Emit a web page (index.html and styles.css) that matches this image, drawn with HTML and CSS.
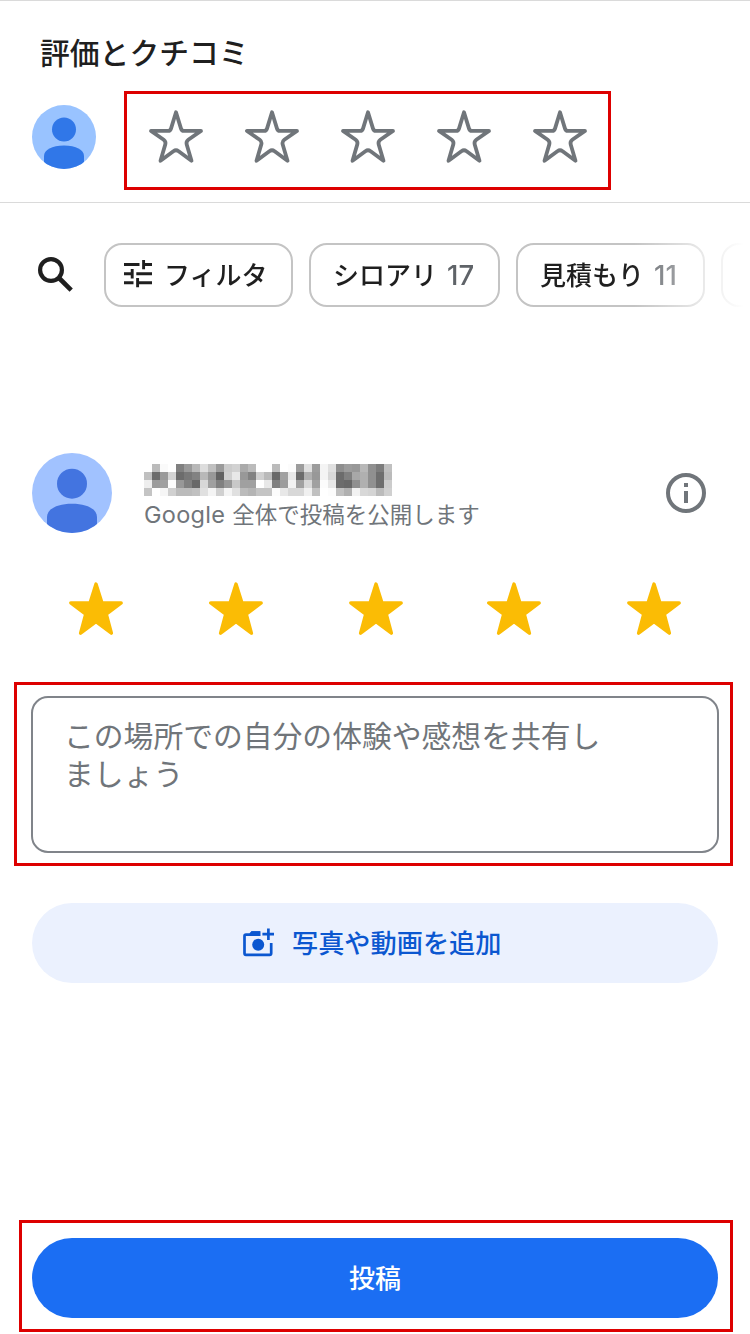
FILE: index.html
```
<!DOCTYPE html>
<html lang="ja">
<head>
<meta charset="utf-8">
<title>評価とクチコミ</title>
<link rel="stylesheet" href="styles.css">
</head>
<body>
<svg class="defs" width="0" height="0" aria-hidden="true">
  <symbol id="star-outline" viewBox="0 0 56 56">
    <path d="M28 4.2 33 20.6Q33.7 22.9 36 22.9H53L40.3 31.8Q37.9 33.6 38.7 36.4L43.5 52.8 30.6 43.2Q28 41.4 25.4 43.2L12.5 52.8 17.3 36.4Q18.1 33.6 15.7 31.8L3 22.9H20Q22.3 22.9 23 20.6Z" fill="none" stroke="#70757a" stroke-width="3.8" stroke-linejoin="round"/>
  </symbol>
  <symbol id="star-filled" viewBox="0 0 56 56">
    <path d="M28 4 34 22.9H53.2L38.3 34.2 43.4 53.2 28 41.6 12.6 53.2 17.7 34.2 2.8 22.9H22Z" fill="#fbbc04" stroke="#fbbc04" stroke-width="3.4" stroke-linejoin="round"/>
  </symbol>
</svg>
<main class="page">
  <section class="summary">
    <h1 class="title">評価とクチコミ</h1>
    <div class="rate-row">
      <svg class="avatar avatar-small" viewBox="0 0 64 64">
        <clipPath id="clip-small"><circle cx="32" cy="32" r="32"/></clipPath>
        <g clip-path="url(#clip-small)"><rect width="64" height="64" fill="#99c3ff"/><circle cx="32" cy="24.5" r="12" fill="#3077e8"/><path d="M12 64V51C12 45 20 40.5 32 40.5S52 45 52 51V64Z" fill="#3077e8"/></g>
      </svg>
      <div class="highlight rate-stars">
        <svg class="star"><use href="#star-outline"/></svg>
        <svg class="star"><use href="#star-outline"/></svg>
        <svg class="star"><use href="#star-outline"/></svg>
        <svg class="star"><use href="#star-outline"/></svg>
        <svg class="star"><use href="#star-outline"/></svg>
      </div>
    </div>
  </section>
  <nav class="filters">
    <svg class="search" viewBox="0 0 36 36" fill="none" stroke="#1f1f1f"><circle cx="13" cy="13" r="10.9" stroke-width="4.2"/><path d="M21 21 33.2 33.2" stroke-width="4.6"/></svg>
    <div class="chips">
      <button class="chip chip-filter">
        <svg class="tune" viewBox="0 0 28 28" fill="none" stroke="#1f1f1f" stroke-width="2.9"><path d="M0 4.5H15.5M18.5 4.5H28M19.6 0V9.2M0 13.7H9.3M12.3 13.7H28M8.2 9V18.4M0 22.7H9.5M12.4 22.7H28M13.6 18V27.3"/></svg>
        <span>フィルタ</span>
      </button>
      <button class="chip chip-termite"><span>シロアリ</span><span class="count">17</span></button>
      <button class="chip chip-estimate"><span>見積もり</span><span class="count">11</span></button>
      <button class="chip chip-more"></button>
    </div>
  </nav>
  <section class="compose">
    <div class="author">
      <svg class="avatar avatar-large" viewBox="0 0 80 80">
        <clipPath id="clip-large"><circle cx="40" cy="40" r="40"/></clipPath>
        <g clip-path="url(#clip-large)"><rect width="80" height="80" fill="#a1c2ff"/><circle cx="40" cy="30.7" r="15" fill="#4374e0"/><path d="M15 80V64C15 56 25 50.7 40 50.7S65 56 65 64V80Z" fill="#4374e0"/></g>
      </svg>
      <div class="author-text">
        <svg class="masked-name" id="masked-name" viewBox="0 0 31 4" shape-rendering="crispEdges"></svg>
        <p class="notice"><span class="latin">Google</span><span class="notice-text">全体で投稿を公開します</span></p>
      </div>
      <svg class="info" viewBox="0 0 40 40"><circle cx="20" cy="20" r="18" fill="none" stroke="#70757a" stroke-width="4"/><path d="M18 10h4v4h-4zM18 18h4v12h-4z" fill="#70757a"/></svg>
    </div>
    <div class="score">
      <svg class="star"><use href="#star-filled"/></svg>
      <svg class="star"><use href="#star-filled"/></svg>
      <svg class="star"><use href="#star-filled"/></svg>
      <svg class="star star-fourth"><use href="#star-filled"/></svg>
      <svg class="star"><use href="#star-filled"/></svg>
    </div>
    <div class="highlight review-frame">
      <div class="review-input">この場所での自分の体験や感想を共有し<br>ましょう</div>
    </div>
    <button class="add-media">
      <svg class="camera" viewBox="0 0 32 30"><path d="M18 4.6H10L8 6.7H4Q2.5 6.7 2.5 8.2V25.3Q2.5 26.8 4 26.8H27.7Q29.2 26.8 29.2 25.3V15" fill="none" stroke="#0b57d0" stroke-width="2.7"/><path d="M9.5 3.2H18.5V8H7.5Z" fill="#0b57d0"/><circle cx="16.2" cy="16.7" r="6" fill="#0b57d0"/><path d="M26.4.5V12M20.4 6.2H32" fill="none" stroke="#0b57d0" stroke-width="2.7"/></svg>
      <span class="add-label">写真や動画を追加</span>
    </button>
    <div class="highlight submit-frame"><button class="submit">投稿</button></div>
  </section>
</main>
<script src="mosaic.js"></script>
</body>
</html>
```
FILE: styles.css
```
* { box-sizing: border-box; }
body {
  margin: 0;
  background: #fff;
  color: #1f1f1f;
  font-family: "Noto Sans CJK JP", sans-serif;
}
button { margin: 0; padding: 0; border: 0; background: none; color: inherit; font: inherit; }
svg { display: block; flex: none; }
.defs { position: absolute; }
.page { width: 750px; height: 1334px; overflow: hidden; }
.highlight { border: 3px solid #d00; }
.star { width: 56px; height: 56px; }

.summary { height: 203px; padding-top: 28px; border-top: 1px solid #dadada; border-bottom: 1px solid #dadada; }
.title { margin: 0 0 18px 40px; font-size: 29.8px; font-weight: 500; line-height: 44px; }
.rate-row { display: flex; padding-left: 32px; }
.avatar-small { width: 64px; height: 64px; margin-top: 14px; }
.rate-stars { display: flex; gap: 40px; width: 487px; height: 99px; margin-left: 28px; padding: 14px 0 0 21px; }

.filters { display: flex; height: 250px; padding: 40px 0 0 38px; }
.search { width: 36px; height: 36px; margin-top: 14px; }
.chips {
  display: flex;
  gap: 16px;
  width: 646px;
  height: 64px;
  margin-left: 30px;
  overflow: hidden;
  -webkit-mask-image: linear-gradient(to right, #000 530px, transparent 640px);
  mask-image: linear-gradient(to right, #000 530px, transparent 640px);
}
.chip {
  display: flex;
  flex: none;
  align-items: center;
  height: 64px;
  padding-bottom: 3px;
  border: 2px solid #c4c4c4;
  border-radius: 18px;
  font-size: 26px;
  font-weight: 500;
  line-height: 38px;
}
.chip-filter { gap: 12px; width: 189px; padding-left: 18px; }
.chip-termite { width: 191px; padding-left: 22px; }
.chip-estimate { width: 189px; padding-left: 22px; }
.chip-more { width: 180px; }
.tune { width: 28px; height: 28px; margin-top: 1px; }
.count { margin: 3px 0 0 10px; color: #5f6368; font-family: Inter, sans-serif; font-size: 27.5px; }

.author { display: flex; height: 80px; padding-left: 32px; }
.avatar-large { width: 80px; height: 80px; }
.author-text { width: 522px; padding: 11px 0 0 32px; }
.masked-name { width: 248px; height: 32px; }
.notice { display: flex; gap: 7px; margin: 2px 0 0; color: #70757a; font-size: 22.5px; line-height: 34px; white-space: nowrap; }
.latin { font-family: Inter, sans-serif; font-size: 23.5px; letter-spacing: 0.3px; }
.notice-text { margin-top: -2px; }
.info { width: 40px; height: 40px; margin: 20px 0 0 32px; }
.score { display: flex; gap: 84px; padding: 47px 0 0 68px; }
.star-fourth { margin-left: -2px; }
.review-frame { width: 719px; height: 184px; margin: 46px 0 0 14px; padding: 11px 11px 0 14px; }
.review-input {
  width: 688px;
  height: 157px;
  padding: 17px 31px;
  border: 2px solid #80848a;
  border-radius: 17px;
  color: #70757a;
  font-size: 29.8px;
  line-height: 38px;
}
.add-media {
  display: flex;
  align-items: center;
  width: 686px;
  height: 80px;
  margin: 37px 0 0 32px;
  padding-left: 210px;
  border-radius: 40px;
  background: #ebf1fe;
  color: #0b57d0;
  font-size: 26.2px;
  font-weight: 500;
}
.add-label { padding-bottom: 2px; }
.camera { width: 32px; height: 30px; margin-right: 18px; }
.submit-frame { width: 714px; height: 112px; margin: 237px 0 0 19px; padding: 15px 12px 0 10px; }
.submit { display: block; width: 686px; height: 80px; padding-bottom: 4px; border-radius: 40px; background: #1b6ef3; color: #fff; font-size: 26px; font-weight: 500; }
```
FILE: mosaic.js
```
// Grey levels of the pixelated author name, one hex pair per cell.
const rows = [
  "ffbbfaff809ab8ddc09accd2aabbffffbbfffc9ce09cf4e08e9c98b8907cc0",
  "c06c9ad46c7882b89862d0e89882d0ba68a2e86cb098f4d86c80a8b0906ebb",
  "ee9ca0fc988068d8a08098c8a0a0ffe8809cf2a0d8a0fce86c6890b0906ecc",
  "c4fff6d0bbbbc0e0f4d0f4e0bbb4c4c4fce8d8d8f0c0fffcc0b0f2d8d4bbd0"
];
const target = document.getElementById("masked-name");
rows.forEach((row, y) => {
  row.match(/../g).forEach((level, x) => {
    const cell = document.createElementNS("http://www.w3.org/2000/svg", "rect");
    cell.setAttribute("x", x);
    cell.setAttribute("y", y);
    cell.setAttribute("width", 1);
    cell.setAttribute("height", 1);
    cell.setAttribute("fill", "#" + level.repeat(3));
    target.appendChild(cell);
  });
});
```
